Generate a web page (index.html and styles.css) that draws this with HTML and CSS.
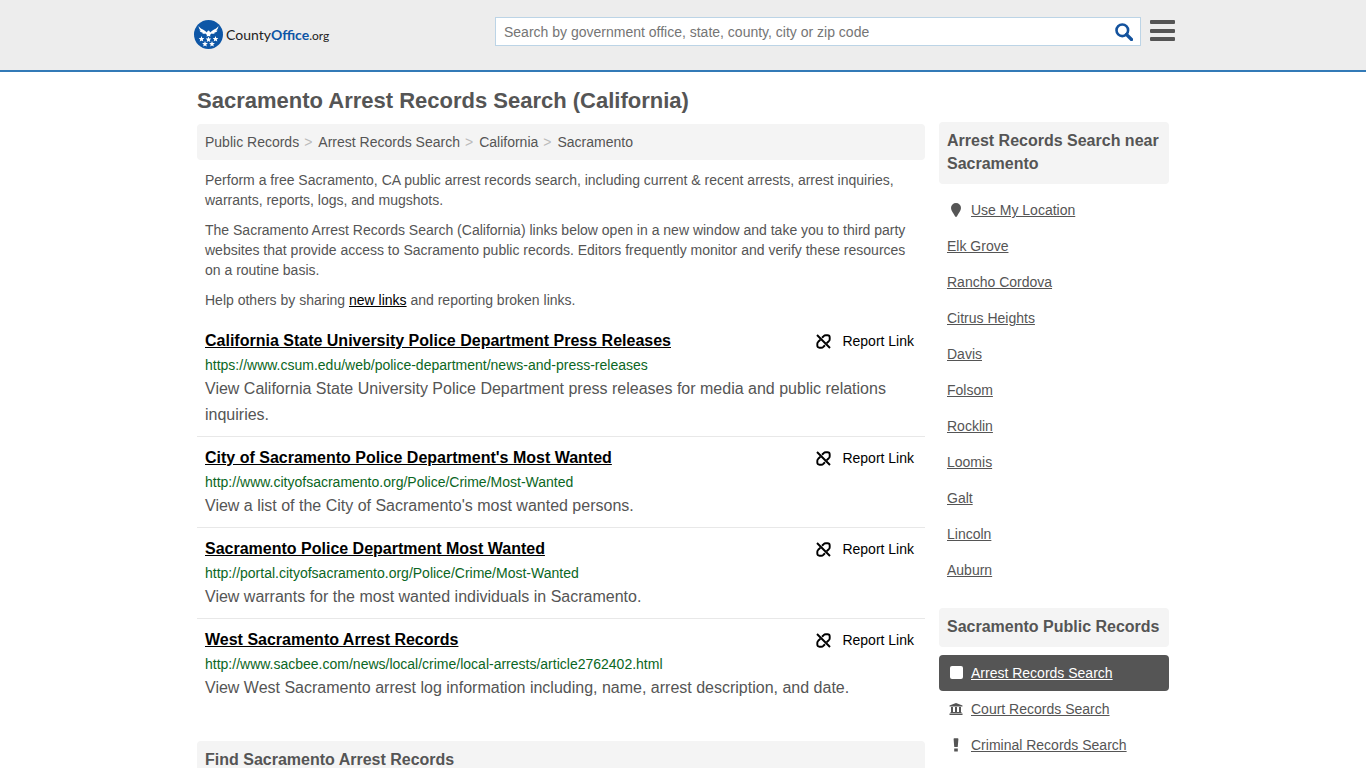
FILE: index.html
```html
<!DOCTYPE html>
<html lang="en">
<head>
<meta charset="utf-8">
<meta name="viewport" content="width=device-width, initial-scale=1">
<title>Sacramento Arrest Records Search (California)</title>
<link rel="stylesheet" href="styles.css">
</head>
<body>
<svg class="sprite" aria-hidden="true">
  <symbol id="unlink" viewBox="0 0 15 15">
    <g fill="none" stroke="currentColor" stroke-width="1.900">
      <path d="M1 1l13 13"/>
      <path d="M6 3.700L7.600 2.200Q8.500 1.300 9.800 1.300h1.700q2.200 0 2.200 2.200v1.700q0 1.100-.9 2L10.600 9.200"/>
      <path d="M9 11.300l-1.600 1.500q-.9.900-2.200.9H3.500q-2.200 0-2.200-2.200V9.800q0-1.100.9-2L4.400 5.800"/>
    </g>
  </symbol>
  <symbol id="star" viewBox="-5 -5 10 10">
    <path d="M0-5l1.300 3.300 3.500.2L2.100.8 3 4.200 0 2.300-3 4.200-2.100.8-4.800-1.500l3.500-.2z"/>
  </symbol>
</svg>
<header class="site-header">
  <div class="header-inner">
    <a class="logo" href="#" aria-label="CountyOffice.org">
      <svg class="logo-mark" viewBox="0 0 58 58" aria-hidden="true">
        <circle cx="29" cy="29" r="29" fill="#0d56a6"/>
        <g fill="#fff">
          <path d="M9 12c3 5 8 6 12 9l5 4 1-3 2-1 2 1 1 3 5-4c4-3 9-4 12-9-1 6-3 8-5 9h3c-2 4-5 4-7 4l2 1c-3 2-5 2-7 1l-3 3 1 3-4-1-4 1 1-3-3-3c-2 1-4 1-7-1l2-1c-2 0-5 0-7-4h3c-2-1-4-3-5-9z"/>
          <use href="#star" x="9" y="32" width="12" height="12"/>
          <use href="#star" x="23" y="33" width="12" height="12"/>
          <use href="#star" x="37" y="32" width="12" height="12"/>
          <use href="#star" x="16" y="42" width="12" height="12"/>
          <use href="#star" x="30" y="42" width="12" height="12"/>
        </g>
      </svg>
      <span class="logo-text">County<b>Office</b><span class="logo-tld">.org</span></span>
    </a>
    <form class="search" role="search">
      <input class="search-input" type="text" aria-label="Search" placeholder="Search by government office, state, county, city or zip code">
      <button class="search-button" type="button" aria-label="Search">
        <svg viewBox="0 0 18 18" width="18" height="18" aria-hidden="true"><g fill="none" stroke="#13529d" stroke-width="2.600"><circle cx="7.300" cy="7.300" r="5.800"/><path d="M11.500 11.500l5 5" stroke-width="3.200" stroke-linecap="round"/></g></svg>
      </button>
    </form>
    <button class="menu-button" type="button" aria-label="Menu">
      <svg viewBox="0 0 25 22" width="25" height="22" aria-hidden="true"><g fill="#555"><rect width="25" height="4" rx="1"/><rect y="9" width="25" height="4" rx="1"/><rect y="17" width="25" height="4" rx="1"/></g></svg>
    </button>
  </div>
</header>
<div class="page">
  <main class="content">
    <h1 class="title">Sacramento Arrest Records Search (California)</h1>
    <nav class="breadcrumb" aria-label="Breadcrumb">
      <a href="#">Public Records</a><span class="sep">&gt;</span><a href="#">Arrest Records Search</a><span class="sep">&gt;</span><a href="#">California</a><span class="sep">&gt;</span><a href="#">Sacramento</a>
    </nav>
    <div class="intro">
      <p>Perform a free Sacramento, CA public arrest records search, including current &amp; recent arrests, arrest inquiries, warrants, reports, logs, and mugshots.</p>
      <p>The Sacramento Arrest Records Search (California) links below open in a new window and take you to third party websites that provide access to Sacramento public records. Editors frequently monitor and verify these resources on a routine basis.</p>
      <p>Help others by sharing <a href="#">new links</a> and reporting broken links.</p>
    </div>
    <ul class="results">
      <li class="result">
        <div class="result-head"><a class="result-title" href="#">California State University Police Department Press Releases</a><a class="report" href="#"><svg width="15" height="15" aria-hidden="true"><use href="#unlink"/></svg>Report Link</a></div>
        <div class="result-url">https://www.csum.edu/web/police-department/news-and-press-releases</div>
        <p class="result-text">View California State University Police Department press releases for media and public relations inquiries.</p>
      </li>
      <li class="result">
        <div class="result-head"><a class="result-title" href="#">City of Sacramento Police Department's Most Wanted</a><a class="report" href="#"><svg width="15" height="15" aria-hidden="true"><use href="#unlink"/></svg>Report Link</a></div>
        <div class="result-url">http://www.cityofsacramento.org/Police/Crime/Most-Wanted</div>
        <p class="result-text">View a list of the City of Sacramento's most wanted persons.</p>
      </li>
      <li class="result">
        <div class="result-head"><a class="result-title" href="#">Sacramento Police Department Most Wanted</a><a class="report" href="#"><svg width="15" height="15" aria-hidden="true"><use href="#unlink"/></svg>Report Link</a></div>
        <div class="result-url">http://portal.cityofsacramento.org/Police/Crime/Most-Wanted</div>
        <p class="result-text">View warrants for the most wanted individuals in Sacramento.</p>
      </li>
      <li class="result">
        <div class="result-head"><a class="result-title" href="#">West Sacramento Arrest Records</a><a class="report" href="#"><svg width="15" height="15" aria-hidden="true"><use href="#unlink"/></svg>Report Link</a></div>
        <div class="result-url">http://www.sacbee.com/news/local/crime/local-arrests/article2762402.html</div>
        <p class="result-text">View West Sacramento arrest log information including, name, arrest description, and date.</p>
      </li>
    </ul>
    <h2 class="panel-title">Find Sacramento Arrest Records</h2>
  </main>
  <aside class="sidebar">
    <section>
      <h2 class="panel-title">Arrest Records Search near Sacramento</h2>
      <ul class="side-list">
        <li><a href="#"><svg viewBox="0 0 18 14" width="18" height="14" aria-hidden="true"><path fill="currentColor" d="M9 0a5 5 0 0 1 5 5c0 3-2.500 5-4 8.200Q9 14.600 8 13.200C6.500 10 4 8 4 5a5 5 0 0 1 5-5z"/></svg><span>Use My Location</span></a></li>
        <li><a href="#"><span>Elk Grove</span></a></li>
        <li><a href="#"><span>Rancho Cordova</span></a></li>
        <li><a href="#"><span>Citrus Heights</span></a></li>
        <li><a href="#"><span>Davis</span></a></li>
        <li><a href="#"><span>Folsom</span></a></li>
        <li><a href="#"><span>Rocklin</span></a></li>
        <li><a href="#"><span>Loomis</span></a></li>
        <li><a href="#"><span>Galt</span></a></li>
        <li><a href="#"><span>Lincoln</span></a></li>
        <li><a href="#"><span>Auburn</span></a></li>
      </ul>
    </section>
    <section>
      <h2 class="panel-title">Sacramento Public Records</h2>
      <ul class="side-list">
        <li><a class="active" href="#"><svg viewBox="0 0 18 14" width="18" height="14" aria-hidden="true"><rect x="3" y="0" width="13" height="13" rx="2" fill="currentColor"/></svg><span>Arrest Records Search</span></a></li>
        <li><a href="#"><svg viewBox="0 0 18 14" width="18" height="14" aria-hidden="true"><path fill="currentColor" d="M9 1l6.500 2.500v1h-13v-1zM4 5h2v5H4zM8 5h2v5H8zM12 5h2v5h-2zM3.500 10h11v1h-11zM2.500 11.500h13V13h-13z"/></svg><span>Court Records Search</span></a></li>
        <li><a href="#"><svg viewBox="0 0 18 14" width="18" height="14" aria-hidden="true"><path fill="currentColor" d="M6.600 1q0-.7.700-.7h3.400q.7 0 .7.700l-.6 7.400q0 .6-.7.600H7.900q-.7 0-.7-.6zM7.200 10.400h3.600v3.200H7.200z"/></svg><span>Criminal Records Search</span></a></li>
      </ul>
    </section>
  </aside>
</div>
</body>
</html>
```
FILE: styles.css
```css
* { box-sizing: border-box; }
body {
  margin: 0;
  background: #fff;
  color: #555;
  font: 14px/20px "Liberation Sans", Arial, sans-serif;
}
h1, h2, p, ul { margin: 0; padding: 0; }
ul { list-style: none; }
button { border: 0; padding: 0; background: none; cursor: pointer; }
svg { display: block; flex: none; }
.sprite { position: absolute; width: 0; height: 0; }

.site-header {
  background: #ededed;
  border-bottom: 2px solid #337ab7;
}
.header-inner {
  display: flex;
  max-width: 984px;
  height: 70px;
  margin: 0 auto;
  padding: 0 0 0 3px;
}
.logo {
  display: flex;
  align-items: center;
  align-self: flex-start;
  gap: 3px;
  margin-top: 20px;
  color: #222;
  text-decoration: none;
}
.logo-mark { width: 29px; height: 29px; }
.logo-text { padding-top: 2px; font: 14px/20px Lato, sans-serif; }
.logo-text b { color: #0d56a6; }
.logo-tld { font-size: 12px; }
.search {
  display: flex;
  flex: 0 1 646px;
  height: 29px;
  margin: 17px 9px 0 auto;
  background: #fff;
  border: 1px solid #bcd4e6;
}
.search-input {
  flex: 1;
  min-width: 0;
  border: 0;
  padding: 0 8px;
  background: none;
  color: #555;
  font: inherit;
}
.search-input::placeholder { color: #757575; }
.search-button { padding: 0 7px; }
.menu-button { align-self: flex-start; margin-top: 20px; }

.page {
  display: grid;
  grid-template-columns: minmax(0, 1fr) 230px;
  gap: 14px;
  max-width: 972px;
  margin: 0 auto;
}
.title { margin: 17px 0 11px; font-size: 22px; line-height: 24px; }
.breadcrumb {
  padding: 8px;
  background: #f4f4f4;
  border-radius: 4px;
}
.breadcrumb a { color: #555; text-decoration: none; }
.sep { padding: 0 6px 0 5px; color: #bbb; }
.intro { padding: 10px 8px; }
.intro p + p { margin-top: 10px; }
.intro a { color: #000; }

.results { margin-bottom: 32px; }
.result { padding: 8px; border-bottom: 1px solid #e8e8e8; }
.result:last-child { border-bottom: 0; }
.result-head {
  display: flex;
  justify-content: space-between;
  line-height: 26px;
}
.result-title { color: #000; font-size: 16px; font-weight: bold; }
.report {
  display: flex;
  align-items: center;
  gap: 11px;
  padding-right: 3px;
  color: #000;
  text-decoration: none;
}
.result-url { margin: 1px 0; color: #0b6623; }
.result-text { font-size: 16px; line-height: 26px; }

.panel-title {
  padding: 7px 8px 9px;
  background: #f4f4f4;
  border-radius: 4px;
  font-size: 16px;
  line-height: 23px;
}
.sidebar { padding-top: 50px; }
.side-list { padding: 8px 0 20px; }
.side-list a {
  display: flex;
  align-items: center;
  gap: 6px;
  padding: 8px;
  border-radius: 4px;
  color: #555;
}
.side-list .active { background: #555; color: #fff; }
```
